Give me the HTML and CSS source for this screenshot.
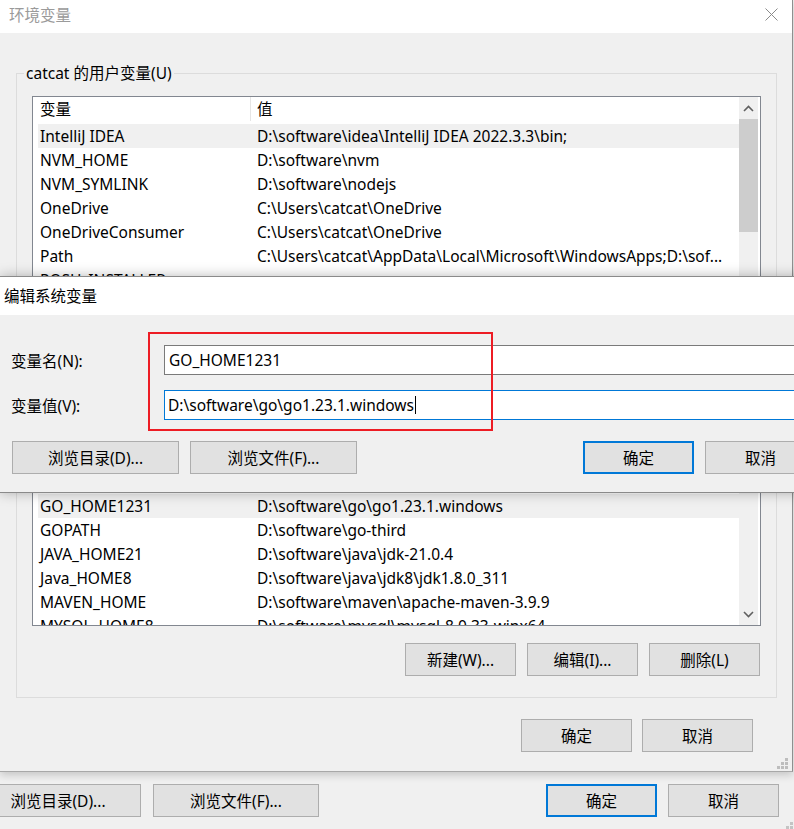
FILE: index.html
```html
<!DOCTYPE html>
<html lang="zh-CN">
<head>
<meta charset="utf-8">
<title>环境变量</title>
<link rel="stylesheet" href="styles.css">
</head>
<body>
<div class="main">
  <div class="titlebar">
    <span class="title-text inactive">环境变量</span>
    <svg class="close" width="13" height="13" viewBox="0 0 13 13"><path d="M0.5 0.5 L12.5 12.5 M12.5 0.5 L0.5 12.5" stroke="#8a8a8a" stroke-width="1" fill="none"/></svg>
  </div>
  <fieldset class="group">
    <legend>catcat 的用户变量(U)</legend>
    <div class="list">
      <div class="list-main">
        <div class="lhead"><div class="h1">变量</div><div class="h2">值</div></div>
        <div class="row sel"><div class="c1">IntelliJ IDEA</div><div class="c2">D:\software\idea\IntelliJ IDEA 2022.3.3\bin;</div></div>
        <div class="row"><div class="c1">NVM_HOME</div><div class="c2">D:\software\nvm</div></div>
        <div class="row"><div class="c1">NVM_SYMLINK</div><div class="c2">D:\software\nodejs</div></div>
        <div class="row"><div class="c1">OneDrive</div><div class="c2">C:\Users\catcat\OneDrive</div></div>
        <div class="row"><div class="c1">OneDriveConsumer</div><div class="c2">C:\Users\catcat\OneDrive</div></div>
        <div class="row"><div class="c1">Path</div><div class="c2">C:\Users\catcat\AppData\Local\Microsoft\WindowsApps;D:\sof...</div></div>
        <div class="row"><div class="c1">POSH_INSTALLER</div><div class="c2"></div></div>
        <div class="hidden-rows"></div>
        <div class="row sel"><div class="c1">GO_HOME1231</div><div class="c2">D:\software\go\go1.23.1.windows</div></div>
        <div class="row"><div class="c1">GOPATH</div><div class="c2">D:\software\go-third</div></div>
        <div class="row"><div class="c1">JAVA_HOME21</div><div class="c2">D:\software\java\jdk-21.0.4</div></div>
        <div class="row"><div class="c1">Java_HOME8</div><div class="c2">D:\software\java\jdk8\jdk1.8.0_311</div></div>
        <div class="row"><div class="c1">MAVEN_HOME</div><div class="c2">D:\software\maven\apache-maven-3.9.9</div></div>
        <div class="row"><div class="c1">MYSQL_HOME8</div><div class="c2">D:\software\mysql\mysql-8.0.33-winx64</div></div>
      </div>
      <div class="vscroll">
        <div class="sarrow"><svg width="11" height="7" viewBox="0 0 11 7"><polyline points="1,6 5.5,1.5 10,6" stroke="#606060" stroke-width="1.6" fill="none"/></svg></div>
        <div class="thumb"></div>
        <div class="track"></div>
        <div class="sarrow"><svg width="11" height="7" viewBox="0 0 11 7"><polyline points="1,1 5.5,5.5 10,1" stroke="#606060" stroke-width="1.6" fill="none"/></svg></div>
      </div>
    </div>
    <div class="btnrow group-btns">
      <div class="btn w111">新建(W)...</div>
      <div class="btn w111">编辑(I)...</div>
      <div class="btn w111">删除(L)</div>
    </div>
  </fieldset>
  <div class="btnrow footer">
    <div class="btn w111">确定</div>
    <div class="btn w111">取消</div>
  </div>
  <svg class="grip" width="12" height="12" viewBox="0 0 12 12" fill="#bdbdbd"><rect x="8" y="0" width="3" height="3"/><rect x="4" y="4" width="3" height="3"/><rect x="8" y="4" width="3" height="3"/><rect x="0" y="8" width="3" height="3"/><rect x="4" y="8" width="3" height="3"/><rect x="8" y="8" width="3" height="3"/></svg>
</div>

<div class="backrow">
  <div class="btn w166 first">浏览目录(D)...</div>
  <div class="btn w166 second">浏览文件(F)...</div>
  <div class="btn w111 default ok">确定</div>
  <div class="btn w111 cancel">取消</div>
  <svg class="grip2" width="12" height="12" viewBox="0 0 12 12" fill="#c4c4c4"><rect x="8" y="0" width="3" height="3"/><rect x="4" y="4" width="3" height="3"/><rect x="8" y="4" width="3" height="3"/><rect x="0" y="8" width="3" height="3"/><rect x="4" y="8" width="3" height="3"/><rect x="8" y="8" width="3" height="3"/></svg>
</div>

<div class="dialog">
  <div class="dtitle">编辑系统变量</div>
  <div class="dbody">
    <div class="field">
      <label class="flabel">变量名(N):</label>
      <div class="finput">GO_HOME1231</div>
    </div>
    <div class="field">
      <label class="flabel">变量值(V):</label>
      <div class="finput focus">D:\software\go\go1.23.1.windows<span class="caret"></span></div>
    </div>
    <div class="btnrow dbtns">
      <div class="btn w167">浏览目录(D)...</div>
      <div class="btn w167">浏览文件(F)...</div>
      <div class="btn w111 default push">确定</div>
      <div class="btn w111">取消</div>
    </div>
  </div>
</div>

<div class="highlight-box"></div>
</body>
</html>
```

FILE: styles.css
```css
html, body {
  margin: 0;
  padding: 0;
}
body {
  width: 794px;
  height: 829px;
  overflow: hidden;
  position: relative;
  background: #f0f0f0;
  font-family: "Noto Sans", "Noto Sans CJK SC", sans-serif;
  font-size: 15.5px;
  color: #000;
}

/* main window */
.main {
  width: 793px;
  height: 772px;
  box-sizing: border-box;
  background: #f0f0f0;
  border-right: 1px solid #8f8f8f;
  border-bottom: 1px solid #a8a8a8;
  box-shadow: 0 3px 8px rgba(0,0,0,0.18);
  display: flex;
  flex-direction: column;
}
.titlebar {
  height: 33px;
  flex: none;
  background: #fff;
  display: flex;
  justify-content: space-between;
  align-items: flex-start;
  padding: 0 14px 0 9px;
}
.title-text {
  line-height: 20px;
  margin-top: 5px;
}
.inactive { color: #9a9a9a; }
.close { margin-top: 8px; }

.group {
  margin: 30px 0 0 16px;
  width: 761px;
  box-sizing: border-box;
  border: 1px solid #dcdcdc;
  padding: 0 0 21px 0;
  min-inline-size: 0;
}
.group legend {
  margin-left: 7px;
  padding: 0 2px;
  line-height: 20px;
}

.list {
  margin: 13px 15px 0 15px;
  height: 530px;
  box-sizing: border-box;
  border: 1px solid #828790;
  background: #fff;
  display: flex;
  overflow: hidden;
}
.list-main {
  flex: 1;
  min-width: 0;
  overflow: hidden;
}
.lhead {
  display: flex;
  height: 24px;
  line-height: 24px;
  margin-bottom: 3px;
}
.h1 {
  width: 210px;
  padding-left: 7px;
  border-right: 1px solid #e5e5e5;
}
.h2 { padding-left: 6px; }
.row {
  display: grid;
  grid-template-columns: 219px 1fr;
  height: 24px;
  line-height: 24px;
  margin-left: 5px;
  white-space: nowrap;
}
.row.sel { background: #f0f0f0; }
.c1 { padding-left: 2px; overflow: hidden; }
.c2 { overflow: hidden; }
.hidden-rows { height: 202px; }

.vscroll {
  width: 19px;
  margin-right: 2px;
  background: #f0f0f0;
  display: flex;
  flex-direction: column;
}
.sarrow {
  height: 22px;
  display: flex;
  align-items: center;
  justify-content: center;
}
.thumb {
  height: 113px;
  background: #cdcdcd;
}
.track { flex: 1; }

.btnrow { display: flex; }
.btn {
  height: 33px;
  box-sizing: border-box;
  background: #e1e1e1;
  border: 1px solid #adadad;
  display: flex;
  align-items: center;
  justify-content: center;
  white-space: nowrap;
  flex: none;
}
.btn.default { border: 2px solid #0078d7; }
.w111 { width: 111px; }
.w166 { width: 166px; }
.w167 { width: 167px; }
.push { margin-left: auto; }

.group-btns {
  margin: 17px 16px 0 0;
  justify-content: flex-end;
  gap: 11px;
}
.footer {
  margin-top: 21px;
  justify-content: flex-end;
  gap: 10px;
  padding-right: 39px;
}
.grip {
  margin-top: auto;
  align-self: flex-end;
  margin-right: 3px;
  margin-bottom: 1px;
}

/* window behind (bottom row) */
.backrow {
  display: flex;
  padding-top: 12px;
  align-items: flex-start;
}
.backrow .first { margin-left: -25px; }
.backrow .second { margin-left: 12px; }
.backrow .ok { margin-left: auto; }
.backrow .cancel { margin-left: 11px; }
.grip2 {
  align-self: flex-end;
  margin-left: 3px;
  margin-top: 38px;
}

/* edit dialog on top */
.dialog {
  position: absolute;
  left: 0;
  top: 276px;
  width: 830px;
  background: #f0f0f0;
  border-top: 1px solid #8a8a8a;
  border-bottom: 1px solid #8a8a8a;
  box-shadow: 0 0 12px rgba(0,0,0,0.28);
}
.dtitle {
  height: 38px;
  line-height: 38px;
  background: #fff;
  padding-left: 4px;
}
.dbody {
  padding: 30px 14px 18px 11px;
}
.field {
  display: grid;
  grid-template-columns: 153px 1fr;
  align-items: center;
}
.field + .field { margin-top: 15px; }
.finput {
  height: 30px;
  box-sizing: border-box;
  border: 1px solid #7a7a7a;
  background: #fff;
  padding-left: 4px;
  line-height: 28px;
  white-space: nowrap;
  display: flex;
  align-items: center;
}
.finput.focus {
  border-color: #0078d7;
  padding-left: 3px;
}
.caret {
  display: inline-block;
  width: 1px;
  height: 18px;
  background: #000;
  margin-left: 1px;
}
.dbtns {
  margin-top: 21px;
  padding-left: 1px;
  gap: 11px;
}
.dbtns .push { margin-left: auto; }

.highlight-box {
  position: absolute;
  left: 148px;
  top: 332px;
  width: 345px;
  height: 99px;
  box-sizing: border-box;
  border: 2px solid #ed1c24;
}
```
